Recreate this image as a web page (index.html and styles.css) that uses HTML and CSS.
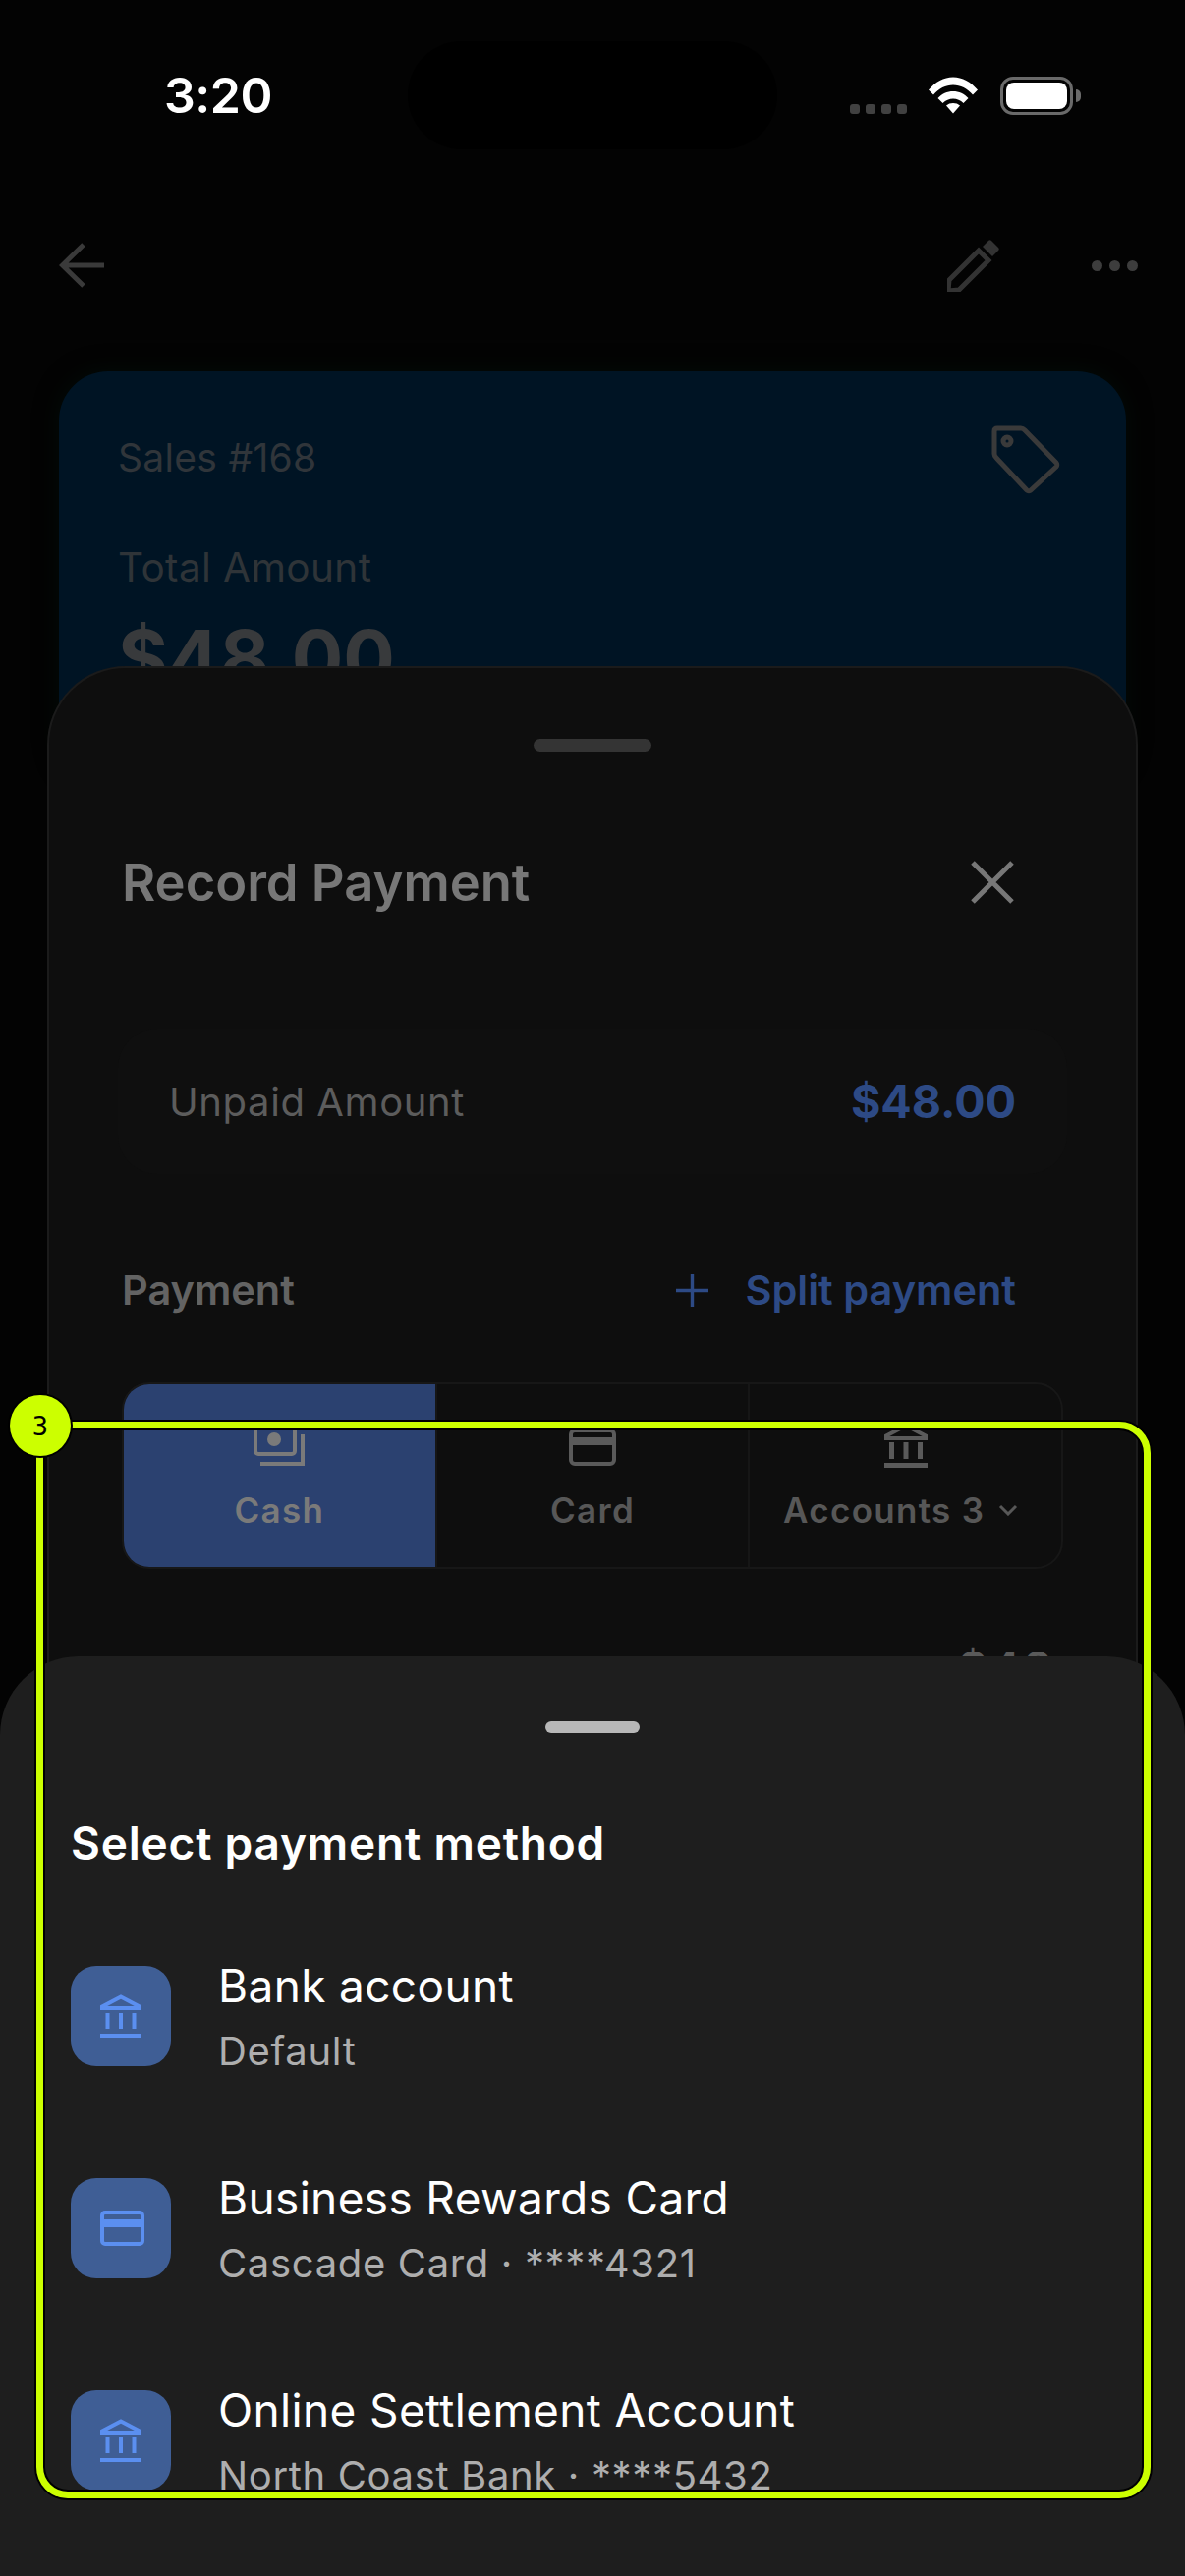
FILE: index.html
```html
<!DOCTYPE html>
<html lang="en">
<head>
<meta charset="utf-8">
<title>Select payment method</title>
<link rel="stylesheet" href="styles.css">
</head>
<body>
<div class="screen">
  <header class="status">
    <span class="time">3:20</span>
    <div class="island"></div>
    <div class="status-icons">
      <div class="signal"><i></i><i></i><i></i><i></i></div>
      <svg class="wifi" viewBox="0 0 50 38"><path d="M0 13.5C7 5.500 15.500 0.500 25 0.500S43 5.500 50 13.500L45 18.500C39.500 12 32.500 8.500 25 8.500S10.500 12 5 18.500Z"/><path d="M9.500 22C13.500 17.500 19 15 25 15S36.500 17.500 40.500 22L35.500 27C32.500 24 29 22.500 25 22.500S17.500 24 14.500 27Z"/><path d="M18 29.500C20 27.800 22.300 27 25 27S30 27.800 32 29.500L25 37.500Z"/></svg>
      <div class="battery"><div class="battery-fill"></div></div>
      <div class="battery-nub"></div>
    </div>
  </header>

  <nav class="nav">
    <svg class="back" viewBox="0 0 48 48"><path d="M46 24H4M25 3L3.500 24 25 45"/></svg>
    <div class="nav-right">
      <svg class="pencil" viewBox="0 0 54 54"><path class="ink" d="M1 53l1-11L32 12l10 10L12 52z"/><path class="ink-fill" d="M36 8l6-6c1-1 2-1 3 0l7 7c1 1 1 2 0 3l-6 6z"/></svg>
      <div class="dots"><i></i><i></i><i></i></div>
    </div>
  </nav>

  <section class="sale-card">
    <div class="sale-head">
      <span class="sale-no">Sales #168</span>
      <svg class="tag" viewBox="0 0 70 70"><path d="M3 6c0-2 1-3 3-3h24c2 0 3 1 4 2l32 33c1 1 1 3 0 4L40 66c-1 1-3 1-4 0L5 33c-1-1-2-2-2-4z"/><circle cx="16" cy="16" r="4"/></svg>
    </div>
    <div class="total-label">Total Amount</div>
    <div class="total-value">$48.00</div>
  </section>

  <section class="record-sheet">
    <div class="handle-dim"></div>
    <div class="record-head">
      <h2 class="record-title">Record Payment</h2>
      <svg class="close" viewBox="0 0 44 44"><path d="M2 2l40 40M42 2L2 42"/></svg>
    </div>
    <div class="unpaid">
      <span class="unpaid-label">Unpaid Amount</span>
      <span class="unpaid-value">$48.00</span>
    </div>
    <div class="payment-head">
      <span class="payment-label">Payment</span>
      <span class="split">
        <svg class="plus" viewBox="0 0 34 34"><path d="M17 0v34M0 17h34"/></svg>
        <span class="split-text">Split payment</span>
      </span>
    </div>
    <div class="segments">
      <div class="segment segment-active">
        <svg class="seg-icon cash-icon" viewBox="0 0 52 44"><rect x="2" y="2" width="40" height="30" rx="3"/><circle class="solid" cx="21" cy="17" r="7"/><path d="M50 12v30H7"/></svg>
        <span class="seg-label">Cash</span>
      </div>
      <div class="segment">
        <svg class="seg-icon card-icon" viewBox="0 0 48 38"><rect x="2" y="2" width="44" height="34" rx="4"/><rect class="solid" x="2" y="9" width="44" height="8"/></svg>
        <span class="seg-label">Card</span>
      </div>
      <div class="segment">
        <svg class="seg-icon bank-icon" viewBox="0 0 46 46"><path d="M23 3L43 13.500V16H3V13.500Z"/><path class="solid" d="M6 20h5v17H6zM20.500 20h5v17h-5zM35 20h5v17h-5zM1 41h44v5H1z"/></svg>
        <span class="seg-label">Accounts 3<svg class="chev" viewBox="0 0 20 12"><path d="M2 2l8 8 8-8"/></svg></span>
      </div>
    </div>
    <div class="amount-peek">$48</div>
  </section>

  <section class="method-sheet">
    <div class="handle"></div>
    <h2 class="method-title">Select payment method</h2>
    <ul class="methods">
      <li class="method">
        <div class="method-icon"><svg class="icon-bank" viewBox="0 0 42 44"><path class="roof" d="M21 2.500L40 12.500V14H2V12.500Z"/><path class="solid" d="M5.500 19h4v16h-4zM19 19h4v16h-4zM32.500 19h4v16h-4zM0 40h42v4H0z"/></svg></div>
        <div class="method-text"><div class="method-name">Bank account</div><div class="method-sub">Default</div></div>
      </li>
      <li class="method">
        <div class="method-icon"><svg class="icon-card" viewBox="0 0 45 36"><rect class="roof" x="2" y="2" width="41" height="32" rx="3"/><rect class="solid" x="2" y="9" width="41" height="8"/></svg></div>
        <div class="method-text"><div class="method-name">Business Rewards Card</div><div class="method-sub">Cascade Card · ****4321</div></div>
      </li>
      <li class="method">
        <div class="method-icon"><svg class="icon-bank" viewBox="0 0 42 44"><path class="roof" d="M21 2.500L40 12.500V14H2V12.500Z"/><path class="solid" d="M5.500 19h4v16h-4zM19 19h4v16h-4zM32.500 19h4v16h-4zM0 40h42v4H0z"/></svg></div>
        <div class="method-text"><div class="method-name">Online Settlement Account</div><div class="method-sub">North Coast Bank · ****5432</div></div>
      </li>
    </ul>
  </section>

  <div class="highlight"></div>
  <div class="badge">3</div>
</div>
</body>
</html>
```
FILE: styles.css
```css
* { box-sizing: border-box; }
html, body { margin: 0; padding: 0; background: #000; }
body { font-family: Inter, "Liberation Sans", sans-serif; }
h2, ul { margin: 0; padding: 0; }
ul { list-style: none; }

.screen { position: relative; width: 1206px; height: 2622px; overflow: hidden; background: #030303; }

/* status bar */
.status { display: flex; align-items: center; height: 150px; padding: 0 0 0 167px; }
.time { width: 248px; margin-top: 44px; font-size: 50px; font-weight: 600; color: #fff; letter-spacing: -0.5px; }
.island { width: 376px; height: 110px; margin-top: 44px; border-radius: 55px; background: #000; }
.status-icons { display: flex; align-items: center; margin-left: 74px; margin-top: 44px; }
.signal { display: flex; gap: 6px; margin-top: 28px; margin-right: 22px; }
.signal i { width: 10px; height: 10px; border-radius: 3px; background: #414141; }
.wifi { width: 50px; height: 38px; margin-right: 23px; fill: #fff; }
.battery { width: 74px; height: 39px; padding: 3px; border: 3px solid #6a6a6a; border-radius: 13px; }
.battery-fill { width: 100%; height: 100%; border-radius: 8px; background: #fff; }
.battery-nub { width: 5px; height: 13px; margin-left: 3px; border-radius: 0 5px 5px 0; background: #6a6a6a; }

/* top nav */
.nav { display: flex; justify-content: space-between; align-items: center; height: 54px; margin-top: 93px; padding: 0 48px 0 60px; }
.back { width: 48px; height: 48px; fill: none; stroke: #3a3a3a; stroke-width: 5; }
.nav-right { display: flex; align-items: center; gap: 93px; }
.pencil { width: 54px; height: 54px; }
.ink { fill: none; stroke: #333; stroke-width: 5; }
.ink-fill { fill: #333; }
.dots { display: flex; gap: 7px; }
.dots i { width: 11px; height: 11px; border-radius: 50%; background: #3d3d3d; }

/* sale card */
.sale-card { height: 420px; margin: 81px 60px 0; padding: 50px 60px; border-radius: 50px; background: #001424; box-shadow: 0 0 24px rgba(0, 20, 12, 0.5); }
.sale-head { display: flex; justify-content: space-between; align-items: flex-start; height: 68px; }
.sale-no { margin-top: 14px; font-size: 39px; color: #30353a; letter-spacing: 0.3px; }
.tag { width: 70px; height: 70px; margin-top: 5px; margin-right: 7px; fill: none; stroke: #3a3a3a; stroke-width: 5; }
.total-label { margin-top: 57px; font-size: 40.500px; color: #2f3438; letter-spacing: 0.4px; }
.total-value { margin-top: 20px; font-size: 78px; font-weight: 700; color: #383a3c; }

/* record payment sheet */
.record-sheet { position: absolute; top: 678px; left: 48px; width: 1110px; height: 1100px; padding: 0 122px 0 74px; border: 2px solid #1b1b1b; border-radius: 80px 80px 0 0; background: #0e0e0e; }
.handle-dim { width: 120px; height: 13px; margin: 72px auto 0; border-radius: 7px; background: #343434; position: relative; left: 24px; }
.record-head { display: flex; justify-content: space-between; align-items: center; height: 60px; margin-top: 103px; }
.record-title { font-size: 52.500px; font-weight: 600; color: #777; }
.close { width: 44px; height: 44px; margin-right: 2px; fill: none; stroke: #777; stroke-width: 5; }
.unpaid { display: flex; justify-content: space-between; align-items: center; height: 148px; margin: 119px -52px 0 -4px; padding: 0 52px 0 52px; border-radius: 40px; background: #0f0f0f; }
.unpaid-label { font-size: 40px; color: #5c5c5c; letter-spacing: 0.6px; }
.unpaid-value { font-size: 46.500px; font-weight: 700; color: #2d4a85; }
.payment-head { display: flex; justify-content: space-between; align-items: center; height: 50px; margin-top: 93px; }
.payment-label { font-size: 41.500px; font-weight: 600; color: #636363; }
.split { display: flex; align-items: center; gap: 37px; }
.plus { width: 33px; height: 33px; fill: none; stroke: #2d4a85; stroke-width: 3.500; }
.split-text { font-size: 41.500px; font-weight: 600; color: #2d4a85; }
.segments { display: flex; height: 190px; margin: 69px -48px 0 0; border: 2px solid #171717; border-radius: 28px; overflow: hidden; }
.segment { flex: 1; display: flex; flex-direction: column; justify-content: flex-end; align-items: center; padding-bottom: 37px; border-left: 2px solid #161616; }
.segment:first-child { border-left: 0; }
.segment-active { background: #2b4170; }
.seg-icon { flex: none; margin-bottom: 24px; fill: none; stroke: #5a5a5a; stroke-width: 4; }
.seg-icon .solid { fill: #5a5a5a; stroke: none; }
.cash-icon { width: 52px; height: 44px; stroke: #7a7a7a; }
.cash-icon .solid { fill: #7a7a7a; }
.card-icon { width: 48px; height: 38px; }
.bank-icon { width: 46px; height: 46px; margin-bottom: 22px; }
.seg-label { display: flex; align-items: center; height: 42px; font-size: 35px; font-weight: 600; color: #575757; letter-spacing: 1.300px; }
.segment-active .seg-label { color: #7a7a7a; }
.chev { width: 20px; height: 12px; margin-left: 14px; margin-right: 10px; fill: none; stroke: #575757; stroke-width: 3; }
.amount-peek { margin: 73px -40px 0 0; font-size: 46px; font-weight: 600; color: #5a5a5a; text-align: right; letter-spacing: 3px; }

/* method sheet */
.method-sheet { position: absolute; top: 1686px; left: 0; width: 1206px; height: 936px; padding: 0 72px; border-radius: 80px 80px 0 0; background: #1e1e1e; }
.handle { width: 96px; height: 12px; margin: 66px auto 0; border-radius: 6px; background: #b8b8b8; }
.method-title { margin-top: 84px; font-size: 46px; line-height: 56px; font-weight: 600; color: #fff; letter-spacing: 0.800px; }
.methods { display: flex; flex-direction: column; gap: 114px; margin-top: 97px; }
.method { display: flex; gap: 48px; height: 102px; }
.method-icon { flex: none; display: flex; justify-content: center; align-items: center; width: 102px; height: 102px; border-radius: 26px; background: #3f5e95; }
.icon-bank { width: 42px; height: 44px; }
.icon-card { width: 45px; height: 36px; margin-left: 3px; }
.roof { fill: none; stroke: #5b8ff0; stroke-width: 4; }
.solid { fill: #5b8ff0; }
.method-name { font-size: 46px; line-height: 40px; color: #fff; letter-spacing: 0.350px; }
.method-sub { margin-top: 25px; font-size: 40px; line-height: 44px; color: #aeaeae; letter-spacing: 0.650px; }

/* annotation */
.highlight { position: absolute; top: 1447px; left: 37px; width: 1134px; height: 1096px; border: 7px solid #ccff00; border-radius: 32px; box-shadow: 0 0 0 2px #000, inset 0 0 0 2px #000; }
.badge { position: absolute; top: 1420px; left: 10px; display: flex; justify-content: center; align-items: center; width: 62px; height: 62px; border-radius: 50%; background: #ccff00; box-shadow: 0 0 0 2px #000; font-family: "DejaVu Sans Mono", monospace; font-size: 27px; color: #000; }
```
